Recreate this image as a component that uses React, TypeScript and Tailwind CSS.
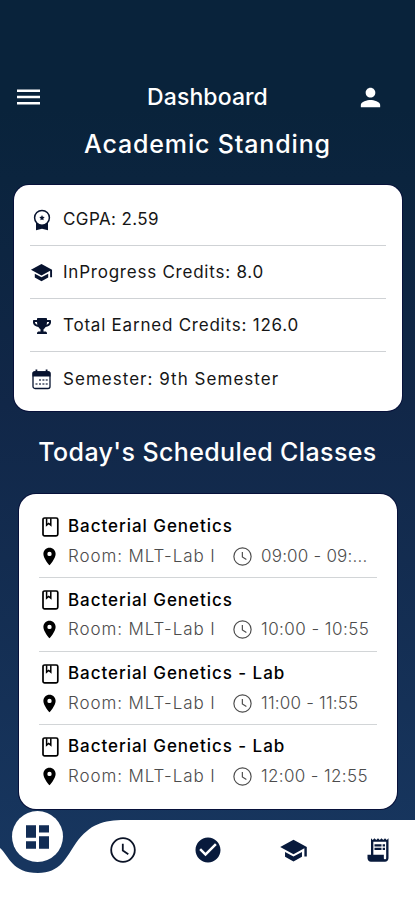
import type { ReactNode } from "react";
import { MdPerson, MdSchool, MdLocationOn, MdCheckCircle, MdReceiptLong } from "react-icons/md";
import { FaTrophy } from "react-icons/fa";

function MenuIcon() {
  return (
    <svg width="23" height="16" viewBox="0 0 23 16" fill="currentColor">
      <path d="M0 .4h23v2.5H0zM0 6.7h23v2.5H0zM0 13h23v2.5H0z" />
    </svg>
  );
}

function AwardIcon() {
  return (
    <svg width="18" height="22" viewBox="0 0 18 22">
      <path d="M3 13.5V21.3L9 19.8L15 21.3V13.5Z" fill="currentColor" />
      <circle cx="9" cy="8.8" r="7.4" fill="white" stroke="currentColor" strokeWidth="1.5" />
      <path d="M9 6.1l.8 1.7 1.9.3-1.4 1.3.3 1.9L9 10.4l-1.6.9.3-1.9-1.4-1.3 1.9-.3z" fill="currentColor" />
    </svg>
  );
}

function CalendarIcon() {
  return (
    <svg width="19" height="21" viewBox="0 0 19 21">
      <rect x="1" y="3" width="17" height="16.5" rx="2" fill="white" stroke="currentColor" strokeWidth="1.3" />
      <path d="M.5 7.5V4.2C.5 3 1.3 2.3 2.5 2.3H3.5V.5H5.3V2.3H13.7V.5H15.5V2.3H16.5C17.7 2.3 18.5 3 18.5 4.2V7.5Z" fill="currentColor" />
      <path d="M7 11h2M10.4 11h2M13.7 11h2M3.5 15h2M7 15h2M10.4 15h2M13.7 15h2" stroke="currentColor" strokeWidth="1.7" opacity=".75" />
    </svg>
  );
}

function BookIcon() {
  return (
    <svg width="18" height="20" viewBox="0 0 18 20" fill="none" stroke="currentColor" className="shrink-0">
      <rect x="1" y="1" width="14.8" height="17.8" rx="1.6" strokeWidth="1.7" />
      <path d="M4.6 1.2V8.2L6.7 6.5L8.8 8.2V1.2" strokeWidth="1.5" />
    </svg>
  );
}

function ClockIcon({ size, stroke }: { size: number; stroke: number }) {
  return (
    <svg width={size} height={size} viewBox="0 0 26 26" fill="none" stroke="currentColor" strokeWidth={stroke} className="shrink-0">
      <circle cx="13" cy="13" r="11.8" />
      <path d="M12.8 6.8V13.6L18.3 17.2" />
    </svg>
  );
}

function DashboardIcon() {
  return (
    <svg width="23" height="24" viewBox="0 0 23 24" fill="currentColor">
      <path d="M0 .3h10v12.5H0zM13 .3h10v7.3H13zM0 16.3h10v7.4H0zM13 11.2h10v12.5H13z" />
    </svg>
  );
}

const standing: { icon: ReactNode; text: string; cls: string }[] = [
  { icon: <AwardIcon />, text: "CGPA: 2.59", cls: "tracking-[0.4px]" },
  { icon: <MdSchool size={23} />, text: "InProgress Credits: 8.0", cls: "tracking-[0.77px]" },
  { icon: <FaTrophy size={18} />, text: "Total Earned Credits: 126.0", cls: "tracking-[0.78px]" },
  { icon: <CalendarIcon />, text: "Semester: 9th Semester", cls: "tracking-[1.03px]" },
];

const classes = [
  { name: "Bacterial Genetics", time: "09:00 - 09:...", cls: "tracking-[0.2px]" },
  { name: "Bacterial Genetics", time: "10:00 - 10:55", cls: "tracking-[0.45px]" },
  { name: "Bacterial Genetics - Lab", time: "11:00 - 11:55", cls: "tracking-[0.2px]" },
  { name: "Bacterial Genetics - Lab", time: "12:00 - 12:55", cls: "tracking-[0.35px]" },
];

export default function App() {
  return (
    <div className="relative flex h-[900px] w-[415px] flex-col overflow-hidden bg-linear-to-b from-[#09233b] from-12% via-[#112748] via-45% to-[#17365f] to-95% font-['Inter',sans-serif]">
      <header className="mt-[80px] flex h-[34px] items-center justify-between pr-[30px] pl-[17px] text-white">
        <MenuIcon />
        <h1 className="ml-[19px] text-[23px] font-medium tracking-[0.1px]">Dashboard</h1>
        <MdPerson size={29} />
      </header>
      <h2 className="mt-[12px] text-center text-[25px] leading-9 font-medium tracking-[0.85px] text-white">Academic Standing</h2>
      <section className="mt-[23px] mr-[13px] ml-[14px] flex h-[226px] flex-col rounded-[15px] bg-white px-4 pt-2 shadow-[0_0_0_1px_#07113a]">
        {standing.map((s, i) => (
          <div key={s.text} className={`flex items-center pt-px ${i < 3 ? "h-[53px] border-b border-[#cfd2d5]" : "h-[54px]"}`}>
            <span className="flex w-[23px] shrink-0 justify-center text-[#07132f]">{s.icon}</span>
            <span className={`ml-[10px] text-[17px] whitespace-nowrap text-[#161616] ${s.cls}`}>{s.text}</span>
          </div>
        ))}
      </section>
      <h2 className="mt-[23px] text-center text-[25px] leading-9 font-medium tracking-[0.38px] text-white">Today's Scheduled Classes</h2>
      <section className="mt-[24px] mr-[18px] ml-[19px] h-[315px] shrink-0 rounded-[17px] bg-white px-5 pt-[17px] shadow-[0_0_0_1px_#07113a]">
        {classes.map((c, i) => (
          <div key={c.time} className={`${i < 3 ? "border-b-[1.5px] border-[#d2d5d7]" : ""} ${i > 0 ? "h-[73.4px] pt-[6px]" : "h-[67.4px]"}`}>
            <div className="flex h-8 items-center pl-[3px] text-black">
              <BookIcon />
              <span className="ml-2 text-[17px] font-medium tracking-[0.95px] whitespace-nowrap">{c.name}</span>
            </div>
            <div className="flex h-[27px] items-center text-[#4c4c4c]">
              <MdLocationOn size={21} className="shrink-0 text-black" />
              <span className="ml-2 w-[165px] shrink-0 text-[17px] font-light tracking-[0.9px] whitespace-nowrap">Room: MLT-Lab I</span>
              <ClockIcon size={19} stroke={1.6} />
              <span className={`ml-[9px] text-[17px] font-light whitespace-nowrap ${c.cls}`}>{c.time}</span>
            </div>
          </div>
        ))}
      </section>
      <nav className="absolute bottom-0 left-0 h-[92px] w-[415px] text-[#081a3c]">
        <svg className="absolute bottom-0 left-0" width="415" height="80" viewBox="0 820 415 80">
          <path d="M0 848C9 856 12 873 38 873C60 873 66 858 76 843C90 824 103 820 125 820H415V900H0Z" fill="white" />
        </svg>
        <div className="absolute top-[3px] left-[12px] flex size-[51px] items-center justify-center rounded-full bg-white text-[#122d55]">
          <DashboardIcon />
        </div>
        <div className="absolute top-[27px] left-[80px] grid w-[341px] grid-cols-4 place-items-center">
          <span className="text-[#0b1326]"><ClockIcon size={26} stroke={1.8} /></span>
          <MdCheckCircle size={30} />
          <MdSchool size={29} />
          <MdReceiptLong size={28} />
        </div>
      </nav>
    </div>
  );
}
